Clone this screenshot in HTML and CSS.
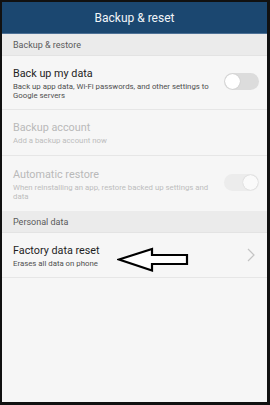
FILE: index.html
```html
<!DOCTYPE html>
<html>
<head>
<meta charset="utf-8">
<link rel="stylesheet" href="styles.css">
</head>
<body>
<div class="frame">
  <div class="appbar">Backup &amp; reset</div>
  <div class="section">Backup &amp; restore</div>
  <div class="item item-1">
    <div class="texts">
      <div class="title">Back up my data</div>
      <div class="sub">Back up app data, Wi-Fi passwords, and other settings to Google servers</div>
    </div>
    <div class="toggle"><span class="knob"></span></div>
  </div>
  <div class="item item-2 disabled">
    <div class="texts">
      <div class="title">Backup account</div>
      <div class="sub">Add a backup account now</div>
    </div>
  </div>
  <div class="item item-3 disabled">
    <div class="texts">
      <div class="title">Automatic restore</div>
      <div class="sub">When reinstalling an app, restore backed up settings and data</div>
    </div>
    <div class="toggle on"><span class="knob"></span></div>
  </div>
  <div class="section">Personal data</div>
  <div class="item item-4">
    <div class="texts">
      <div class="title">Factory data reset</div>
      <div class="sub">Erases all data on phone</div>
    </div>
    <svg class="chev" width="8" height="14" viewBox="0 0 8 14"><path d="M1 1 L7 7 L1 13" fill="none" stroke="#c4c4c4" stroke-width="1.2"/></svg>
  </div>
  <svg class="arrow" width="74" height="26" viewBox="0 0 74 26"><path d="M2 12.5 L35 2 L35 8 L70 8 L70 17 L35 17 L35 23.5 Z" fill="#fff" stroke="#000" stroke-width="2.2" stroke-linejoin="miter"/></svg>
</div>
</body>
</html>
```
FILE: styles.css
```css
* { box-sizing: border-box; }
html, body { margin: 0; padding: 0; }
body {
  width: 270px;
  height: 405px;
  background: #000;
  font-family: Roboto, "Noto Sans", "Liberation Sans", sans-serif;
}
.frame {
  position: relative;
  width: 270px;
  height: 405px;
  border-style: solid;
  border-color: #111;
  border-width: 2px 3px 3px 2px;
  background: #f6f6f6;
  display: flex;
  flex-direction: column;
}
.appbar {
  height: 32px;
  background: #1b4770;
  color: #f2f5f8;
  font-size: 12px;
  display: flex;
  align-items: center;
  justify-content: center;
  border-bottom: 1px solid #4d7196;
}
.section {
  height: 22px;
  background: #ebebeb;
  color: #5a5a5a;
  font-size: 9px;
  display: flex;
  align-items: center;
  padding-left: 11px;
  border-bottom: 1px solid #e3e3e3;
}
.item {
  display: flex;
  align-items: center;
  padding: 2px 8px 0 11px;
  border-bottom: 1px solid #e6e6e6;
  background: #f6f6f6;
}
.item-1 { height: 54px; }
.item-2 { height: 46px; }
.item-3 { height: 55px; border-bottom: none; }
.item-4 { height: 45px; }
.texts { flex: 1; }
.title {
  font-size: 10.8px;
  color: #1e1e1e;
  line-height: 14px;
}
.sub {
  font-size: 7.8px;
  color: #4e4e4e;
  line-height: 9.5px;
  margin-top: 1px;
  padding-right: 14px;
}
.disabled .title { color: #b9b9b9; }
.disabled .sub { color: #bdbdbd; }
.toggle {
  width: 35px;
  height: 17px;
  border-radius: 9px;
  background: #dcdcdc;
  position: relative;
  flex: none;
  margin-bottom: 4px;
}
.knob {
  position: absolute;
  left: 1px;
  top: 1px;
  width: 15px;
  height: 15px;
  border-radius: 50%;
  background: #fff;
  box-shadow: 0 0 1px rgba(0,0,0,0.25);
}
.toggle.on { background: #ececec; }
.toggle.on .knob { left: auto; right: 1px; background: #fafafa; }
.chev { flex: none; margin-right: 4px; margin-bottom: 2px; }
.arrow {
  position: absolute;
  left: 115px;
  top: 245px;
}
```
